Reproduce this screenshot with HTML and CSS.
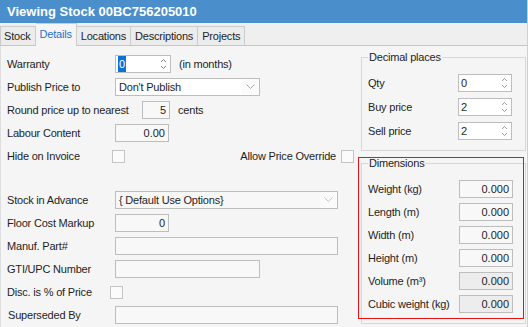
FILE: index.html
```html
<!DOCTYPE html>
<html lang="en">
<head>
    <meta charset="UTF-8">
    <title>Viewing Stock 00BC756205010</title>
    <link rel="stylesheet" href="styles.css">
</head>
<body>

<div class="window">
    <div class="titlebar">Viewing Stock 00BC756205010</div>

    <div class="tabs">
        <div class="tab first">Stock</div>
        <div class="tab active">Details</div>
        <div class="tab">Locations</div>
        <div class="tab">Descriptions</div>
        <div class="tab">Projects</div>
    </div>

    <div class="page">
        <div class="form">
            <div class="row">
                <span class="lbl">Warranty</span>
                <div class="spin w-warranty">
                    <span class="value"><span class="selected">0</span></span>
                    <svg class="arrows" width="7" height="14" viewBox="0 0 7 14"><path d="M1 5 L3.5 2.5 L6 5 M1 9 L3.5 11.5 L6 9" stroke="#8c8c8c" fill="none"/></svg>
                </div>
                <span class="after">(in months)</span>
            </div>
            <div class="row">
                <span class="lbl">Publish Price to</span>
                <div class="combo w-mid">
                    <span class="value">Don't Publish</span>
                    <span class="drop"><svg width="9" height="6" viewBox="0 0 9 6"><path d="M0.5 0.5 L4.5 4.5 L8.5 0.5" stroke="#a8a8a8" fill="none"/></svg></span>
                </div>
            </div>
            <div class="row">
                <span class="lbl lbl-wide">Round price up to nearest</span>
                <input class="field w-tiny" type="text" value="5" readonly>
                <span class="after">cents</span>
            </div>
            <div class="row">
                <span class="lbl">Labour Content</span>
                <input class="field w-short" type="text" value="0.00" readonly>
            </div>
            <div class="row">
                <span class="lbl">Hide on Invoice</span>
                <span class="check nudge"></span>
                <span class="push">Allow Price Override</span>
                <span class="check"></span>
            </div>
            <div class="spacer"></div>
            <div class="row">
                <span class="lbl">Stock in Advance</span>
                <div class="combo w-long dim">
                    <span class="value">{ Default Use Options}</span>
                    <span class="drop"><svg width="9" height="6" viewBox="0 0 9 6"><path d="M0.5 0.5 L4.5 4.5 L8.5 0.5" stroke="#c4c4c4" fill="none"/></svg></span>
                </div>
            </div>
            <div class="row">
                <span class="lbl">Floor Cost Markup</span>
                <input class="field w-short" type="text" value="0" readonly>
            </div>
            <div class="row">
                <span class="lbl">Manuf. Part#</span>
                <input class="field w-long" type="text" value="" readonly>
            </div>
            <div class="row">
                <span class="lbl">GTI/UPC Number</span>
                <input class="field w-mid" type="text" value="" readonly>
            </div>
            <div class="row">
                <span class="lbl">Disc. is % of Price</span>
                <span class="check nudge-more"></span>
            </div>
            <div class="row">
                <span class="lbl indent">Superseded By</span>
                <input class="field w-long" type="text" value="" readonly>
            </div>
        </div>

        <div class="side">
            <fieldset class="group">
                <legend>Decimal places</legend>
                <div class="group-rows">
                    <div class="grow">
                        <span class="glbl">Qty</span>
                        <div class="spin w-dec">
                            <span class="value">0</span>
                            <svg class="arrows" width="7" height="14" viewBox="0 0 7 14"><path d="M1 5 L3.5 2.5 L6 5 M1 9 L3.5 11.5 L6 9" stroke="#9a9a9a" fill="none"/></svg>
                        </div>
                    </div>
                    <div class="grow">
                        <span class="glbl">Buy price</span>
                        <div class="spin w-dec">
                            <span class="value">2</span>
                            <svg class="arrows" width="7" height="14" viewBox="0 0 7 14"><path d="M1 5 L3.5 2.5 L6 5 M1 9 L3.5 11.5 L6 9" stroke="#9a9a9a" fill="none"/></svg>
                        </div>
                    </div>
                    <div class="grow">
                        <span class="glbl">Sell price</span>
                        <div class="spin w-dec">
                            <span class="value">2</span>
                            <svg class="arrows" width="7" height="14" viewBox="0 0 7 14"><path d="M1 5 L3.5 2.5 L6 5 M1 9 L3.5 11.5 L6 9" stroke="#9a9a9a" fill="none"/></svg>
                        </div>
                    </div>
                </div>
            </fieldset>

            <fieldset class="group">
                <legend>Dimensions</legend>
                <div class="group-rows dims">
                    <div class="grow">
                        <span class="glbl">Weight (kg)</span>
                        <input class="field w-dim" type="text" value="0.000" readonly>
                    </div>
                    <div class="grow">
                        <span class="glbl">Length (m)</span>
                        <input class="field w-dim" type="text" value="0.000" readonly>
                    </div>
                    <div class="grow">
                        <span class="glbl">Width (m)</span>
                        <input class="field w-dim" type="text" value="0.000" readonly>
                    </div>
                    <div class="grow">
                        <span class="glbl">Height (m)</span>
                        <input class="field w-dim" type="text" value="0.000" readonly>
                    </div>
                    <div class="grow">
                        <span class="glbl">Volume (m³)</span>
                        <input class="field w-dim disabled" type="text" value="0.000" readonly>
                    </div>
                    <div class="grow">
                        <span class="glbl">Cubic weight (kg)</span>
                        <input class="field w-dim disabled" type="text" value="0.000" readonly>
                    </div>
                </div>
            </fieldset>
        </div>
    </div>

    <div class="highlight"></div>
</div>

</body>
</html>
```

FILE: styles.css
```css
body {
    margin: 0;
    background-color: #f5f5f5;
}
.window {
    position: relative;
    width: 528px;
    height: 327px;
    box-sizing: border-box;
    border-right: 1px solid #cfcfcf;
    overflow: hidden;
    background-color: #f5f5f5;
    font-family: "Liberation Sans", Arial, sans-serif;
    font-size: 11px;
    letter-spacing: -0.2px;
    color: #1e1e1e;
}
.titlebar {
    height: 23px;
    line-height: 24px;
    padding-left: 7px;
    background-color: #4a8fcb;
    color: #fff;
    font-size: 13px;
    font-weight: bold;
    letter-spacing: 0;
}
.tabs {
    display: flex;
    align-items: flex-end;
    height: 22px;
    background-color: #efefef;
    border-bottom: 1px solid #c6c6c6;
}
.tab {
    height: 19px;
    line-height: 19px;
    padding: 0 4px;
    box-sizing: border-box;
    border-top: 1px solid #cbcbcb;
    border-right: 1px solid #cbcbcb;
    background-color: #ececec;
}
.tab.first {
    border-left: 1px solid #cbcbcb;
    padding-left: 3px;
}
.tab.active {
    height: 23px;
    line-height: 21px;
    margin-bottom: -1px;
    background-color: #f5f5f5;
    color: #1f73c9;
}
.page {
    display: flex;
    height: 281px;
    border-left: 1px solid #dedede;
}
.form {
    width: 347px;
    flex: none;
    padding: 9px 0 0 6px;
    display: flex;
    flex-direction: column;
    gap: 5px;
}
.row {
    display: flex;
    align-items: center;
    height: 18px;
}
.spacer {
    height: 16px;
}
.lbl {
    width: 108px;
    flex: none;
}
.lbl-wide {
    width: 135px;
}
.indent {
    padding-left: 1px;
    width: 107px;
}
.after {
    margin-left: 8px;
}
.push {
    margin-left: auto;
    margin-right: 5px;
}
.field {
    height: 18px;
    box-sizing: border-box;
    margin: 0;
    padding: 0 3px;
    border: 1px solid #bdbdbd;
    background-color: #f8f8f8;
    font-family: inherit;
    font-size: 11px;
    color: #1e1e1e;
    text-align: right;
    outline: none;
}
.field.disabled {
    background-color: #ededed;
}
.w-tiny { width: 28px; }
.w-short { width: 54px; }
.w-mid { width: 145px; }
.w-long { width: 223px; }
.w-warranty { width: 56px; }
.w-dec { width: 54px; }
.w-dim { width: 54px; }
.spin,
.combo {
    display: flex;
    align-items: center;
    height: 18px;
    box-sizing: border-box;
    border: 1px solid #bdbdbd;
    background-color: #fff;
}
.spin .value {
    flex: 1;
    padding-left: 2px;
}
.spin .arrows {
    margin-right: 3px;
}
.selected {
    display: inline-block;
    height: 16px;
    line-height: 16px;
    padding: 0 1px;
    background-color: #0a74d6;
    color: #fff;
}
.combo .value {
    flex: 1;
    padding-left: 3px;
}
.combo .drop {
    width: 17px;
    height: 16px;
    display: flex;
    align-items: center;
    justify-content: center;
    background-color: #fbfbfb;
}
.combo.dim {
    background-color: #f7f7f7;
}
.check {
    width: 13px;
    height: 13px;
    box-sizing: border-box;
    border: 1px solid #c4c4c4;
    background-color: #fbfbfb;
}
.nudge {
    margin-left: -3px;
}
.nudge-more {
    margin-left: -5px;
}
.side {
    flex: 1;
    padding: 4px 1px 0 7px;
    display: flex;
    flex-direction: column;
    gap: 5px;
}
.group {
    margin: 0;
    padding: 0 6px;
    border: 1px solid #d8d8d8;
    min-width: 0;
}
.group legend {
    padding: 0 1px;
    line-height: 14px;
}
.group-rows {
    padding: 10px 0 10px;
    display: flex;
    flex-direction: column;
    gap: 6px;
}
.group-rows.dims {
    gap: 5px;
}
.grow {
    display: flex;
    align-items: center;
    height: 18px;
}
.glbl {
    width: 90px;
    flex: none;
}
.dims .glbl {
    width: 91px;
}
.highlight {
    position: absolute;
    left: 358px;
    top: 157px;
    width: 166px;
    height: 162px;
    box-sizing: border-box;
    border: 1px solid #ee1111;
}
```
